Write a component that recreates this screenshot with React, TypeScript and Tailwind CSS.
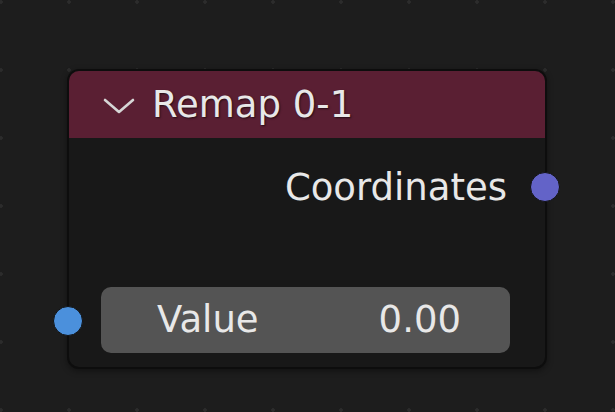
import React from "react";

export default function App() {
  return (
    <div
      className="w-[615px] h-[412px] overflow-hidden bg-[#1d1d1d] bg-[radial-gradient(circle,#2c2c2c_1.5px,transparent_2px)] bg-[length:68px_68px] bg-[position:-33px_-32px] pt-[69px] pl-[67px]"
      style={{ fontFamily: '"DejaVu Sans", "Liberation Sans", sans-serif' }}
    >
      <div className="relative w-[480px] h-[300px] rounded-[12px] border-2 border-[#0d0d0d] bg-[#181818] shadow-[0_2px_6px_rgba(0,0,0,0.4)]">
        <div className="h-[67px] rounded-t-[10px] bg-[#5a1f33] flex items-center pl-[34px] gap-[17px]">
          <svg width="32" height="18" viewBox="0 0 32 18" className="shrink-0 mt-[2px]">
            <polyline points="2,3 16,15 30,3" fill="none" stroke="#d6d6d6" strokeWidth="2.6" strokeLinecap="round" strokeLinejoin="round" />
          </svg>
          <span className="text-[37px] leading-[42px] text-[#e8e8e8] [text-shadow:1px_1px_2px_rgba(0,0,0,0.6)]">
            Remap 0-1
          </span>
        </div>
        <div className="flex flex-col">
          <div className="mt-[29px] pr-[38px] text-right text-[37px] leading-[42px] text-[#e8e8e8]">
            Coordinates
          </div>
          <div className="mt-[78px] ml-[32px] w-[409px] h-[66px] rounded-[10px] bg-[#545454] flex items-center justify-between pl-[56px] pr-[49px] text-[37px] leading-[42px] text-[#e8e8e8]">
            <span>Value</span>
            <span>0.00</span>
          </div>
        </div>
        <div className="absolute left-[461px] top-[101px] w-[30px] h-[30px] rounded-full bg-[#6363c8] border border-[#111111]" />
        <div className="absolute left-[-16px] top-[235px] w-[30px] h-[30px] rounded-full bg-[#4b90dc] border border-[#111111]" />
      </div>
    </div>
  );
}
